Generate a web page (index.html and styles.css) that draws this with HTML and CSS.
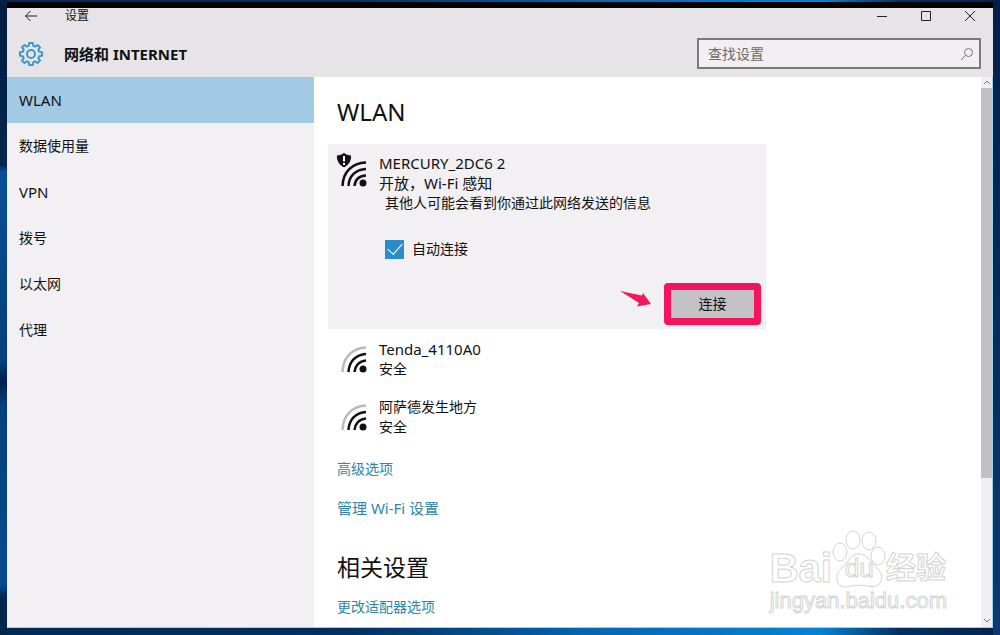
FILE: index.html
```html
<!DOCTYPE html>
<html lang="zh-CN">
  <head>
    <meta charset="UTF-8" />
    <title>设置</title>
    <link rel="stylesheet" href="styles.css">
  </head>
  <body>
    <div class="window">
      <header class="header">
        <div class="titlebar">
          <button class="icon-button back" aria-label="返回">
            <svg width="14" height="12" viewBox="0 0 14 12"><path d="M13 6H1.5M6.5 1l-5 5 5 5" /></svg>
          </button>
          <span class="window-title">设置</span>
          <div class="window-controls">
            <button class="icon-button" aria-label="最小化">
              <svg width="12" height="12" viewBox="0 0 12 12"><path d="M1 6.500H11" /></svg>
            </button>
            <button class="icon-button" aria-label="最大化">
              <svg width="12" height="12" viewBox="0 0 12 12"><path d="M1.500 1.500H10.500V10.500H1.500Z" /></svg>
            </button>
            <button class="icon-button" aria-label="关闭">
              <svg width="12" height="12" viewBox="0 0 12 12"><path d="M1 1L11 11M11 1L1 11" /></svg>
            </button>
          </div>
        </div>
        <div class="section-bar">
          <svg class="gear" width="24" height="24" viewBox="0 0 24 24">
            <path d="M9.700 3.900L10.300 1H13.700L14.300 3.900L16.100 4.650L18.600 3L21 5.400L19.350 7.900L20.100 9.700L23 10.300V13.700L20.100 14.300L19.350 16.100L21 18.600L18.600 21L16.100 19.350L14.300 20.100L13.700 23H10.300L9.700 20.100L7.900 19.350L5.400 21L3 18.600L4.650 16.100L3.900 14.300L1 13.700V10.300L3.900 9.700L4.650 7.900L3 5.400L5.400 3L7.900 4.650Z" />
            <circle cx="12" cy="12" r="4" />
          </svg>
          <span class="section-name">网络和 INTERNET</span>
          <form class="search">
            <input type="text" placeholder="查找设置" aria-label="查找设置" />
            <svg width="14" height="14" viewBox="0 0 14 14"><circle cx="8.500" cy="5.500" r="4" /><path d="M5.600 8.400L1 13" /></svg>
          </form>
        </div>
      </header>

      <div class="main">
        <nav class="sidebar">
          <a href="#" class="active latin">WLAN</a>
          <a href="#">数据使用量</a>
          <a href="#" class="latin">VPN</a>
          <a href="#">拨号</a>
          <a href="#">以太网</a>
          <a href="#">代理</a>
        </nav>

        <main class="content">
          <h1>WLAN</h1>

          <section class="network selected">
            <svg class="wifi" width="30" height="36" viewBox="0 0 30 36">
              <path d="M5.500 33C6 19 15 10 29 9.500M11.500 33C12 23 18.500 16.500 29 16M17.500 33C18 27 22 23 29 22.500" />
              <circle class="fill" cx="26" cy="30" r="3.500" />
              <path class="shield" d="M-0.500 2C3 2 5 1 7 -0.500C9 1 11 2 14.500 2C15 8 12 12 7 15C2 12 -1 8 -0.500 2Z" />
              <path class="mark" d="M7 3V8.500M7 10V12" />
            </svg>
            <div class="network-body">
              <div class="latin">MERCURY_2DC6 2</div>
              <div class="latin">开放，Wi-Fi 感知</div>
              <div class="indent">其他人可能会看到你通过此网络发送的信息</div>
              <label class="auto-connect">
                <input type="checkbox" checked />
                自动连接
              </label>
              <div class="actions">
                <svg class="arrow" width="34" height="20" viewBox="0 0 34 20"><path d="M1 1L23 5.500L24 3L32 14L18 16.500L20 13Z" /></svg>
                <button class="connect">连接</button>
              </div>
            </div>
          </section>

          <section class="network">
            <svg class="wifi" width="30" height="28" viewBox="0 0 30 28">
              <path class="weak" d="M5.500 27C6 13 15 3 29 2.500" />
              <path d="M11.500 27C12 17 18.500 9.500 29 9M17.500 27C18 21 22 16 29 15.500" />
              <circle class="fill" cx="26" cy="24" r="3.500" />
            </svg>
            <div class="network-body">
              <div class="latin">Tenda_4110A0</div>
              <div>安全</div>
            </div>
          </section>

          <section class="network">
            <svg class="wifi" width="30" height="28" viewBox="0 0 30 28">
              <path class="weak" d="M5.500 27C6 13 15 3 29 2.500" />
              <path d="M11.500 27C12 17 18.500 9.500 29 9M17.500 27C18 21 22 16 29 15.500" />
              <circle class="fill" cx="26" cy="24" r="3.500" />
            </svg>
            <div class="network-body">
              <div>阿萨德发生地方</div>
              <div>安全</div>
            </div>
          </section>

          <div class="links">
            <a href="#">高级选项</a>
            <a href="#" class="latin">管理 Wi-Fi 设置</a>
          </div>

          <h2>相关设置</h2>
          <div class="links">
            <a href="#">更改适配器选项</a>
          </div>
        </main>

        <div class="scrollbar">
          <svg width="8" height="5" viewBox="0 0 8 5"><path d="M1 4l3-3 3 3" /></svg>
          <div class="track"><div class="thumb"></div></div>
          <svg width="8" height="5" viewBox="0 0 8 5"><path d="M1 1l3 3 3-3" /></svg>
        </div>
      </div>

      <div class="watermark">
        <div class="brand">
          <span>Bai</span>
          <span class="paw">
            <svg width="54" height="58" viewBox="0 0 54 58">
              <ellipse cx="8" cy="22" rx="7" ry="9" />
              <ellipse cx="21" cy="10" rx="7" ry="9" />
              <ellipse cx="37" cy="11" rx="7" ry="9" />
              <ellipse cx="46" cy="26" rx="7" ry="9" />
              <path d="M27 24C35 24 38 31 43 36C48 40 51 45 49 51C47 57 40 57 35 56C30 55 24 55 19 56C13 58 6 57 5 50C4 44 7 40 12 36C17 31 19 24 27 24Z" />
            </svg>
            <span class="du">du</span>
          </span>
          <span class="jingyan">经验</span>
        </div>
        <div class="site">jingyan.baidu.com</div>
      </div>
    </div>
  </body>
</html>
```

FILE: styles.css
```css
* {
  box-sizing: border-box;
}
body {
  margin: 0;
  min-height: 100vh;
  display: flex;
  padding: 2px 7px 7px;
  background:
    linear-gradient(#021d42, #04264f 26%, #0a4f96 27%, #063e7c 57%, #021f48 60%, #063f7e 64%, #084a8f 92%, #03264f 94%) left / 7px 100% no-repeat,
    linear-gradient(#031f48, #0a3a70) right / 7px 100% no-repeat,
    linear-gradient(90deg, #032a55, #02305f 35%, #0468b5 60%, #0583d6 82%, #032f60 90%, #02254c);
  color: #111;
  font-family: "Noto Sans", "Noto Sans CJK SC", sans-serif;
  font-size: 14px;
  line-height: 20px;
}
svg {
  display: block;
  flex-shrink: 0;
  fill: none;
  stroke: #222;
}
a {
  text-decoration: none;
}
.window {
  position: relative;
  flex: 1;
  display: flex;
  flex-direction: column;
  border-top: 6px solid #000;
  background-color: #fff;
  box-shadow: inset 0 -1px #8ccbe8;
}

/* Title bar and search */
.header {
  background-color: #e6e4e7;
}
.titlebar {
  display: flex;
  align-items: center;
  height: 15px;
  padding: 0 17px;
  font-size: 12px;
}
.icon-button {
  padding: 0;
  border: 0;
  background: none;
}
.window-title {
  margin-left: 27px;
}
.window-controls {
  display: flex;
  gap: 32px;
  margin-left: auto;
}
.section-bar {
  display: flex;
  align-items: center;
  height: 54px;
  padding: 7px 12px 0;
}
.gear {
  stroke: #3d9ac8;
  stroke-width: 2;
}
.section-name {
  margin-left: 21px;
  font-size: 15px;
  font-weight: bold;
}
.search {
  display: flex;
  align-items: center;
  width: 284px;
  height: 31px;
  margin-left: auto;
  padding: 0 5px 0 9px;
  border: 2px solid #7b797c;
  background-color: #f1eff2;
}
.search input {
  flex: 1;
  min-width: 0;
  padding: 0;
  border: 0;
  outline: 0;
  background: none;
  font: inherit;
}
.search input::placeholder {
  color: #6c6a6d;
}
.search svg {
  stroke: #777;
}

/* Navigation */
.main {
  flex: 1;
  display: flex;
  border: solid #9fd0ea;
  border-width: 0 1px 1px 0;
}
.sidebar {
  width: 307px;
  background-color: #f2f0f3;
}
.sidebar a {
  display: block;
  padding: 13px 12px;
  color: #111;
}
.sidebar .active {
  background-color: #a2cae4;
}
.latin,
.sidebar .latin {
  font-size: 15px;
}

/* Page content */
.content {
  flex: 1;
  padding: 19px 14px 0;
}
h1,
h2 {
  margin: 0 9px;
  font-size: 23px;
  font-weight: normal;
  line-height: 32px;
}
h1 {
  margin-bottom: 16px;
  font-size: 24px;
}
.network {
  display: flex;
  gap: 12px;
  max-width: 438px;
  margin-bottom: 18px;
  padding: 0 12px 0 9px;
}
.network.selected {
  margin-bottom: 10px;
  padding: 9px 12px 11px 9px;
  background-color: #f2f0f3;
}
.network-body {
  flex: 1;
}
.wifi {
  overflow: visible;
  margin-top: 6px;
  stroke: #111;
  stroke-width: 2.5;
}
.selected .wifi {
  margin-top: 0;
}
.wifi .fill {
  fill: #111;
  stroke: none;
}
.wifi .weak {
  stroke: #bbb;
}
.wifi .shield {
  fill: #111;
  stroke: #f2f0f3;
  stroke-width: 1;
}
.wifi .mark {
  stroke: #fff;
  stroke-width: 2;
}
.indent {
  padding-left: 6px;
}
.auto-connect {
  display: flex;
  align-items: center;
  gap: 8px;
  margin: 26px 6px 31px;
}
.auto-connect input {
  display: flex;
  justify-content: center;
  width: 19px;
  height: 19px;
  margin: 0;
  appearance: none;
  background-color: #2b8ccc;
}
.auto-connect input:checked::after {
  content: "";
  width: 7px;
  height: 13px;
  border: solid #fff;
  border-width: 0 1px 1px 0;
  transform: rotate(42deg);
}
.actions {
  display: flex;
  justify-content: flex-end;
  gap: 18px;
}
.arrow path {
  fill: #ed1c5f;
  stroke: none;
}
.connect {
  position: relative;
  width: 83px;
  height: 28px;
  padding: 0;
  border: 0;
  background-color: #c4c2c5;
  color: #111;
  font: inherit;
}
.connect::after {
  content: "";
  position: absolute;
  inset: -7px;
  border: 7px solid #f2145f;
  border-radius: 4px;
}
.links {
  display: flex;
  flex-direction: column;
  align-items: flex-start;
  gap: 19px;
  margin: 22px 9px 33px;
}
.links a {
  color: #2f86a6;
}
h2 + .links {
  margin: 14px 9px 0;
}

/* Scroll bar */
.scrollbar {
  display: flex;
  flex-direction: column;
  align-items: center;
  width: 11px;
  padding: 3px 0 4px;
  background-color: #f1eff2;
}
.scrollbar svg {
  stroke: #777;
}
.track {
  flex: 1;
  width: 100%;
  padding: 3px 0;
}
.thumb {
  height: 74%;
  background-color: #c2c0c3;
}

/* Watermark */
.watermark {
  position: absolute;
  right: 46px;
  bottom: 14px;
  color: #fff;
  -webkit-text-stroke: 1px #d4d4d4;
  font-family: "Liberation Sans", "Noto Sans CJK SC", sans-serif;
}
.brand {
  display: flex;
  align-items: flex-end;
  font-size: 40px;
  font-weight: bold;
  line-height: 40px;
}
.paw {
  position: relative;
}
.paw svg {
  stroke: #d4d4d4;
}
.du {
  position: absolute;
  left: 13px;
  bottom: 0;
  font-size: 26px;
  font-weight: normal;
}
.jingyan {
  font-size: 30px;
}
.site {
  font-size: 22px;
  line-height: 26px;
}
```
